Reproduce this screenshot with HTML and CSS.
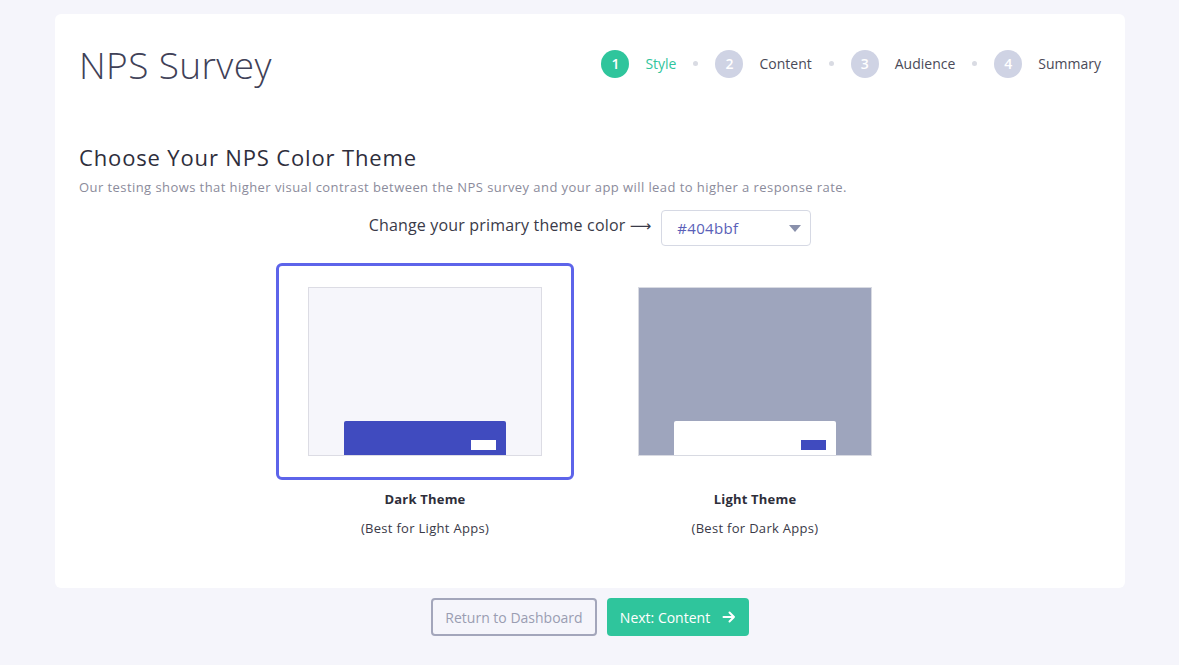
FILE: index.html
```html
<!DOCTYPE html>
<html lang="en">
<head>
<meta charset="utf-8">
<title>NPS Survey</title>
<link rel="stylesheet" href="styles.css">
</head>
<body>
<div class="page">
  <header class="card header">
    <h1 class="title">NPS Survey</h1>
    <nav class="steps">
      <span class="num active">1</span><span class="label active">Style</span><span class="dot"></span>
      <span class="num">2</span><span class="label">Content</span><span class="dot"></span>
      <span class="num">3</span><span class="label">Audience</span><span class="dot"></span>
      <span class="num">4</span><span class="label">Summary</span>
    </nav>
  </header>
  <main class="card body">
    <h2 class="heading">Choose Your NPS Color Theme</h2>
    <p class="sub">Our testing shows that higher visual contrast between the NPS survey and your app will lead to higher a response rate.</p>
    <div class="color-row">
      <span class="color-label">Change your primary theme color <span class="arrow-glyph">⟶</span></span>
      <div class="select"><span class="select-value">#404bbf</span><span class="caret"></span></div>
    </div>
    <div class="themes">
      <div class="theme">
        <div class="theme-box selected">
          <div class="preview dark-preview"><div class="bar dark-bar"><span class="btn-mini white"></span></div></div>
        </div>
        <div class="theme-name">Dark Theme</div>
        <div class="theme-note">(Best for Light Apps)</div>
      </div>
      <div class="theme">
        <div class="theme-box">
          <div class="preview light-preview"><div class="bar light-bar"><span class="btn-mini blue"></span></div></div>
        </div>
        <div class="theme-name">Light Theme</div>
        <div class="theme-note">(Best for Dark Apps)</div>
      </div>
    </div>
  </main>
  <div class="actions">
    <button class="btn btn-outline">Return to Dashboard</button>
    <button class="btn btn-primary">Next: Content
      <svg class="arrow" width="14" height="14" viewBox="0 0 14 14"><path d="M1.5 7H12M7.5 2.5L12 7l-4.5 4.5" fill="none" stroke="#fff" stroke-width="2" stroke-linecap="round" stroke-linejoin="round"/></svg>
    </button>
  </div>
</div>
</body>
</html>
```

FILE: styles.css
```css
* { box-sizing: border-box; }
html, body { margin: 0; padding: 0; }
body {
  background: #f5f5fb;
  font-family: "Open Sans", "Noto Sans", sans-serif;
  color: #3a3a48;
  width: 1179px;
  height: 665px;
  overflow: hidden;
}
.page {
  width: 1070px;
  margin: 14px 0 0 55px;
}
.card { background: #fff; }
.header {
  height: 99px;
  border-radius: 6px 6px 0 0;
  display: flex;
  align-items: center;
  justify-content: space-between;
  padding: 0 24px;
}
.title {
  margin: 0;
  font-size: 37px;
  font-weight: 300;
  color: #3f4157;
  letter-spacing: 0.4px;
  line-height: 1;
  position: relative;
  top: 1px;
}
.steps {
  display: flex;
  align-items: center;
  gap: 17px;
  font-size: 14px;
}
.num {
  width: 28px; height: 28px;
  border-radius: 50%;
  background: #cfd3e4;
  color: #fff;
  display: flex; align-items: center; justify-content: center;
  font-size: 14px;
  font-weight: 600;
}
.num.active { background: #2fc59c; }
.label { color: #4a4a58; margin-left: -1px; }
.label.active { color: #2fc59c; }
.dot { width: 5px; height: 5px; border-radius: 50%; background: #d9dbe3; }
.body {
  height: 475px;
  border-radius: 0 0 6px 6px;
  padding: 29px 24px 0;
}
.heading {
  margin: 0;
  font-size: 22px;
  font-weight: 400;
  color: #2e2e3c;
  line-height: 30px;
  letter-spacing: 0.85px;
}
.sub {
  margin: 6px 0 0;
  font-size: 13px;
  color: #8b8b9b;
  line-height: 18px;
  letter-spacing: 0.43px;
}
.color-row {
  display: flex;
  justify-content: center;
  align-items: center;
  gap: 10px;
  margin-top: 14px;
}
.color-label { font-size: 16px; color: #3a3a48; position: relative; top: -3px; letter-spacing: 0.18px; }
.arrow-glyph { font-family: "DejaVu Sans", sans-serif; font-size: 15px; letter-spacing: 0; }
.select {
  width: 150px; height: 36px;
  border: 1px solid #d6d9e4;
  border-radius: 4px;
  display: flex; align-items: center; justify-content: space-between;
  padding: 0 9px 0 15px;
}
.select-value { color: #5a5fb8; font-size: 15px; letter-spacing: 0.3px; }
.caret {
  width: 0; height: 0;
  border-left: 6px solid transparent;
  border-right: 6px solid transparent;
  border-top: 7px solid #8990ab;
}
.themes {
  display: flex;
  justify-content: center;
  gap: 32px;
  margin-top: 17px;
}
.theme { width: 298px; text-align: center; }
.theme-box {
  height: 217px;
  border: 3px solid transparent;
  border-radius: 6px;
  padding: 21px 29px;
}
.theme-box.selected { border-color: #5d64ea; }
.preview {
  height: 169px;
  border: 1px solid #dcdce4;
  position: relative;
  display: flex;
  justify-content: center;
  align-items: flex-end;
}
.dark-preview { background: #f6f6fb; }
.light-preview { background: #9ea5bd; border-color: #d8dae2; }
.bar {
  width: 162px; height: 34px;
  border-radius: 2px 2px 0 0;
  display: flex; justify-content: flex-end; align-items: flex-end;
  padding: 0 10px 5px 0;
}
.dark-bar { background: #404bbf; }
.light-bar { background: #fff; }
.btn-mini { width: 25px; height: 10px; }
.btn-mini.white { background: #fff; }
.btn-mini.blue { background: #404bbf; }
.theme-name {
  margin-top: 9px;
  font-size: 13px;
  font-weight: 700;
  color: #2e2e3a;
  line-height: 20px;
  letter-spacing: 0.2px;
}
.theme-note {
  margin-top: 9px;
  font-size: 13px;
  color: #3a3a48;
  line-height: 20px;
  letter-spacing: 0.3px;
}
.actions {
  display: flex;
  justify-content: center;
  gap: 10px;
  margin-top: 10px;
}
.btn {
  height: 38px;
  border-radius: 4px;
  font-family: inherit;
  font-size: 14px;
  display: flex; align-items: center; justify-content: center;
  cursor: pointer;
}
.btn-outline {
  width: 166px;
  background: transparent;
  border: 2px solid #a3a6bb;
  color: #9a9db2;
}
.btn-primary {
  width: 142px;
  background: #2fc59c;
  border: none;
  color: #fff;
  gap: 12px;
}
```
